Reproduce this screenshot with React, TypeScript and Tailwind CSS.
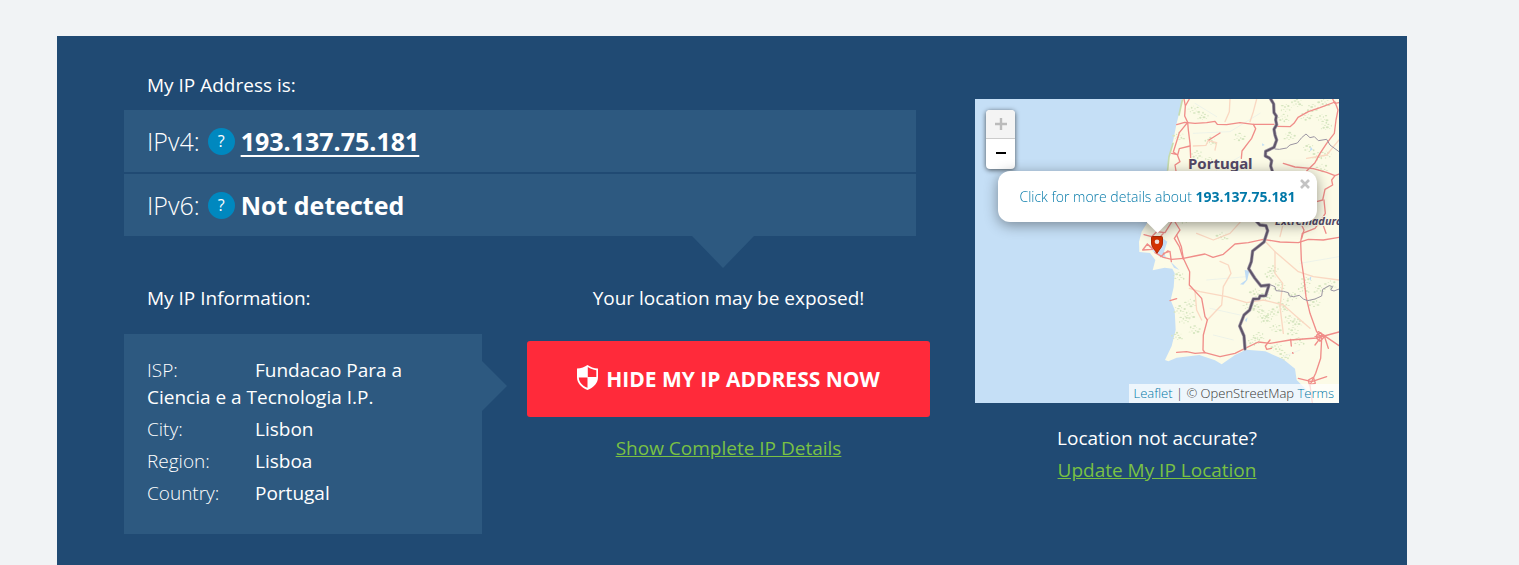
import { type ReactNode } from "react";

const details = [
  { label: "ISP:", value: "Fundacao Para a Ciencia e a Tecnologia I.P." },
  { label: "City:", value: "Lisbon" },
  { label: "Region:", value: "Lisboa" },
  { label: "Country:", value: "Portugal" },
];

const mainRoads = [
  // north
  "M132 27 L136 48 L148 27 M136 48 L134 78 L143 97 L145 120 L150 160 L152 205",
  "M110 104 L134 97 L165 100 L200 98 L225 94 L232 103 L260 104 L300 98 L340 103 L402 103",
  "M411 109 L450 110 L462 100 L474 82 L505 65 L540 53 L585 36 M585 36 L594 60 L588 90 L583 130 L560 160 L540 190 L525 218 L500 243",
  "M578 27 L585 40 L597 38",
  "M143 97 L118 128 L100 186 L113 195 L118 176 L150 168 M95 190 L112 194 L120 215 L105 225 L108 243",
  "M340 103 L347 116 L335 145 L325 158 L306 183 L304 205",
  "M207 150 L240 129",
  "M430 220 L465 231 L520 236 L560 247 L585 257 L597 252 M585 257 L575 270 L578 285 L555 298 L548 330 L530 335",
  "M552 330 L556 370 L540 395 L525 415 L487 430 L482 455",
  "M480 395 L492 420 L485 445 M547 398 L558 430",
  // Lisbon surroundings and the route east
  "M12 434 L35 440 L50 425 L75 428 L95 396 M35 440 L38 465 L70 430",
  "M105 396 L120 420 L103 445 L118 470 L130 508",
  "M8 480 L22 462 L38 478 L8 480 M22 462 L50 484 M45 488 L70 502 L95 508 L130 505",
  "M70 490 L90 484 L94 515 M62 500 L84 482",
  "M130 505 L165 498 L195 492 L219 502 L250 493 L285 462 L325 458 L370 448 L420 456 L475 458 L505 448 L550 450 L597 442",
  // southern motorways
  "M110 435 L124 470 L130 505 L149 545 L148 585 L185 625 L195 680 L202 690 L190 735 L189 780 L195 788",
  "M110 787 L140 785 L165 790 L195 788 L240 800 L285 790 L315 775 L355 756 L390 760 L450 750 L530 744 L597 726",
  "M482 455 L484 510 L492 565 L498 620 L510 670 L530 725 L545 745 L542 805 L527 850 L510 885 L517 939",
  "M525 740 L552 735 L565 775 M540 745 L525 765 M535 725 L597 767 M475 865 L515 875 L560 860",
  "M530 735 L542 728 L552 742 L540 754 L530 745 Z M505 870 L520 862 L526 880 L508 884 Z",
  "M90 632 L110 626 M390 750 L376 768 L380 778 L394 775 M452 748 L454 768 M458 788 L459 790",
];

const minorRoads = [
  "M270 27 L268 65 L255 95 M350 27 L340 65 L330 95",
  "M160 168 L198 166 L204 152 L230 158 L225 180",
  "M240 514 L265 525 L273 550 L250 590 L245 645 L202 690",
  "M148 595 L180 605 L260 620 L320 638 L370 630 L430 645 L470 680 L510 715",
  "M370 448 L405 485 L475 545 L520 560 L597 570",
  "M405 485 L405 550 L428 580 L420 650 L430 730",
  "M300 397 L270 430 L220 450 L170 430 M430 400 L420 440",
  "M165 605 L170 660 L185 690 M597 150 L560 195 L500 205",
];

const border =
  "M388 20 L401 42 L402 68 L409 78 L407 90 L410 104 L402 118 L405 135 L410 150 L402 172 L377 184 L376 198 L388 204 L395 212 L392 228 L397 243 M350 395 L360 405 L378 407 L383 422 L372 456 L338 483 L334 515 L326 536 L344 564 L363 588 L387 585 L377 617 L360 618 L357 626 L340 627 L329 660 L312 675 L299 708 L312 738 L315 777";

const woods = [
  [440, 55], [470, 40], [500, 80], [545, 85], [560, 110], [430, 85], [520, 55],
  [550, 40], [535, 200], [505, 175], [450, 140], [545, 235], [560, 195], [210, 155],
  [300, 142], [160, 60], [190, 80], [170, 195], [210, 215], [115, 140], [130, 390],
  [115, 560], [120, 660], [150, 640], [135, 690], [110, 740], [165, 720], [145, 675],
  [400, 540], [390, 555], [420, 590], [345, 610], [380, 620], [350, 655], [400, 670],
  [430, 640], [460, 620], [490, 600], [450, 690], [405, 715], [380, 690], [355, 740],
  [460, 725], [410, 775], [435, 800], [475, 755], [540, 600], [570, 585], [500, 575],
  [425, 655], [370, 675], [325, 650], [475, 700], [340, 755], [525, 640], [245, 440],
];

const speckle = [
  [-14, -3], [-9, 5], [-5, -7], [-2, 2], [3, 9], [5, -4], [9, 3], [13, -8], [16, 6], [1, -12],
];

function RegionMap() {
  return (
    <svg
      className="block h-full w-full"
      viewBox="0 0 364 304"
      preserveAspectRatio="xMidYMid slice"
      role="img"
      aria-label="Map of Portugal"
    >
      <rect width="364" height="304" fill="#c5dff6" />
      <g transform="translate(165 -9) scale(.33333)" fill="none" strokeLinejoin="round" strokeLinecap="round">
        <path
          d="M127 20 L120 60 L110 100 L100 150 L88 195 L82 243 L55 330 L30 385 L5 425 L-3 455 L-2 486 L30 489 L46 510 L38 541 L74 533 L97 536 L104 550 L101 592 L92 630 L104 660 L107 720 L95 768 L75 810 L85 814 L110 803 L178 795 L225 811 L245 823 L285 795 L318 779 L376 784 L430 808 L465 836 L470 870 L500 900 L515 945 L610 945 L610 20 Z"
          fill="#fcfbe7"
        />
        <path d="M127 30 L117 75 M99 160 L87 200 L83 240" stroke="#c5dcae" strokeWidth="5" />
        <path d="M36 482 L50 478 L68 445 L82 455 L72 485 L78 505 L60 500 L50 491 Z M92 515 L118 540 L102 533 Z" fill="#c5dff6" />
        <g fill="#d5e5bf">
          {woods.map(([x, y], i) =>
            speckle.map(([dx, dy], j) => (
              <ellipse
                key={`${i}-${j}`}
                cx={x + dx * (i % 2 ? 1 : -1)}
                cy={y + dy}
                rx={((i + j) % 4) + 1.5}
                ry={((i * 2 + j) % 3) + 1}
              />
            )),
          )}
        </g>
        <path
          d="M160 130 L270 125 L360 70 M165 40 L230 80 M200 570 L320 560 M210 655 L300 675 M220 735 L280 750 M480 520 L597 500 M430 800 L480 780 M230 240 L300 200"
          stroke="#e6efea"
          strokeWidth="2"
        />
        <path
          d="M300 583 L318 570 L314 540 L328 542 L322 570 L310 584 Z M512 170 L518 178 L510 184 Z M315 690 L323 682 L319 697 Z M366 160 L374 165 L367 168 Z M508 565 L514 558 L512 573 Z"
          fill="#bfdcf5"
        />
        <g stroke="#fad8c2" strokeWidth="4">
          {minorRoads.map((d) => (
            <path key={d} d={d} />
          ))}
        </g>
        <g stroke="#f08d89" strokeWidth="4">
          {mainRoads.map((d) => (
            <path key={d} d={d} />
          ))}
        </g>
        <g stroke="#9a94a2" strokeWidth="3">
          <path d="M405 177 L418 178 L440 174 L450 165 L472 159 L485 143 L498 132 L510 143 L523 140 L535 152 L560 148 L570 165 L597 185" />
          <path d="M388 583 L405 590 L408 602 L430 604 L445 608 L448 618 L460 620 L478 616 L490 627 L503 632 L525 627 L545 618 L548 598 L568 587 L578 590 L572 600 L582 603 L600 596" />
        </g>
        <path d={border} stroke="#a59eab" strokeWidth="10" />
        <path d={border} stroke="#5f5569" strokeWidth="6" />
      </g>
      <g fill="#534866" stroke="#fcfbe7" strokeWidth="2" paintOrder="stroke" fontFamily="'Noto Sans', sans-serif" fontWeight="700">
        <text x="213" y="70" fontSize="15">Portugal</text>
        <text x="300" y="126" fontSize="11" fontStyle="italic">Extremadura</text>
      </g>
    </svg>
  );
}

function ShieldIcon() {
  return (
    <svg className="-mt-1 h-[25px] w-[21px]" viewBox="0 0 21 25" aria-hidden="true">
      <path d="M10.5 0 C13 2 17 3.3 21 3.5 V12 C21 18 17 22.5 10.5 25 C4 22.5 0 18 0 12 V3.5 C4 3.3 8 2 10.5 0 Z" fill="#fff" />
      <path d="M10.8 2.1 C13.5 3.8 16 4.8 19.3 5.2 V12 H10.8 Z M1.8 12.4 H10.5 V22.8 C5 20.5 2 17 1.8 12.4 Z" fill="#ff2a3a" />
    </svg>
  );
}

function AddressRow({ label, children }: { label: string; children: ReactNode }) {
  return (
    <div className="flex h-[62px] items-center bg-[#2d5980] px-[23px] text-[25px]">
      <span className="font-light">{label}</span>
      <button
        type="button"
        aria-label={`What is ${label}`}
        className="mr-1.5 ml-2 flex size-[27px] items-center justify-center rounded-full bg-[#0088bf] text-base"
      >
        ?
      </button>
      {children}
    </div>
  );
}

function LocationMap() {
  return (
    <div className="relative h-[304px] overflow-hidden">
      <RegionMap />
      <div className="absolute top-[11px] left-[11px] w-[29px] overflow-hidden rounded-[4px] bg-white text-black shadow-[0_1px_5px_rgba(0,0,0,.65)]">
        <button type="button" disabled aria-label="Zoom in" className="flex h-[29px] w-full items-center justify-center border-b border-[#ccc] bg-[#f4f4f4]">
          <svg viewBox="0 0 12 12" className="size-3" aria-hidden="true">
            <path d="M0 6H12M6 0V12" stroke="#bbb" strokeWidth="2.4" />
          </svg>
        </button>
        <button type="button" aria-label="Zoom out" className="flex h-[30px] w-full items-center justify-center">
          <svg viewBox="0 0 12 12" className="size-3" aria-hidden="true">
            <path d="M1 5H11" stroke="#000" strokeWidth="2" />
          </svg>
        </button>
      </div>

      <svg viewBox="0 0 12 18" className="absolute top-[137px] left-[176px] h-[18px] w-3" aria-hidden="true">
        <path d="M1.5 .5 H10.5 Q11.5 .5 11.5 1.5 V7 C11.5 11 8.5 13 6 17.3 C3.5 13 .5 11 .5 7 V1.5 Q.5 .5 1.5 .5 Z" fill="#d63200" stroke="#b12c08" />
        <circle cx="6" cy="5.8" r="2.3" fill="#f6e5df" />
      </svg>

      <div className="absolute top-[72px] left-[23px] drop-shadow-[0_3px_7px_rgba(0,0,0,.4)]">
        <div className="flex h-[51px] w-[319px] items-center justify-center rounded-[12px] bg-white text-sm font-light whitespace-nowrap text-[#0078a8]">
          <a href="#details">
            Click for more details about <b className="font-bold">193.137.75.181</b>
          </a>
          <button type="button" aria-label="Close" className="absolute top-2 right-[7px]">
            <svg viewBox="0 0 10 10" className="size-[10px]" aria-hidden="true">
              <path d="M1 1L9 9M9 1L1 9" stroke="#c3c3c3" strokeWidth="2.6" />
            </svg>
          </button>
        </div>
        <div className="mx-auto h-[11px] w-[22px] bg-white [clip-path:polygon(0_0,100%_0,50%_100%)]" />
      </div>

      <div className="absolute right-0 bottom-0 h-[19px] bg-white/70 px-[5px] text-[13px] leading-[19px] font-light text-[#333]">
        <a href="#leaflet" className="text-[#0078a8]">Leaflet</a> | © OpenStreetMap{" "}
        <a href="#terms" className="text-[#0078a8]">Terms</a>
      </div>
    </div>
  );
}

export default function App() {
  return (
    <div className="flex min-h-screen bg-[#f1f3f5] pt-9 pr-28 pl-[57px] font-['Open_Sans',sans-serif] text-[19px] leading-[27px] text-white">
      <main className="grid flex-1 grid-cols-[minmax(0,1fr)_364px] content-start gap-[45px] bg-[#204a73] pt-9 pr-[68px] pb-[31px] pl-[67px]">
        <section>
          <h2 className="mb-[11px] pl-[23px]">My IP Address is:</h2>
          <div className="relative mr-3.5 flex flex-col gap-[2px]">
            <AddressRow label="IPv4:">
              <a href="#details" className="font-bold underline decoration-2 underline-offset-4">
                193.137.75.181
              </a>
            </AddressRow>
            <AddressRow label="IPv6:">
              <span className="font-bold">Not detected</span>
            </AddressRow>
            <div className="absolute top-full right-[162px] h-[32px] w-[62px] bg-[#2d5980] [clip-path:polygon(0_0,100%_0,50%_100%)]" />
          </div>

          <div className="mt-[49px] grid grid-cols-[358fr_403fr] gap-[45px]">
            <div>
              <h2 className="mb-[22px] pl-[23px]">My IP Information:</h2>
              <div className="relative bg-[#2d5980] px-[23px] pt-[23px] pb-[22px]">
                <dl>
                  {details.map(({ label, value }) => (
                    <div key={label} className="mb-[5px]">
                      <dt className="inline-block w-[108px] font-light">{label}</dt>
                      <dd className="inline">{value}</dd>
                    </div>
                  ))}
                </dl>
                <div className="absolute top-[27px] left-full h-[50px] w-[25px] bg-[#2d5980] [clip-path:polygon(0_0,100%_50%,0_100%)]" />
              </div>
            </div>
            <div className="text-center">
              <p>Your location may be exposed!</p>
              <button
                type="button"
                className="mt-[29px] mb-[18px] flex h-[76px] w-full items-center justify-center gap-2 rounded-[3px] bg-[#ff2a3a] text-[21px] font-bold uppercase"
              >
                <ShieldIcon />
                Hide my IP address now
              </button>
              <a href="#details" className="text-[#7ac143] underline">
                Show Complete IP Details
              </a>
            </div>
          </div>
        </section>

        <aside className="pt-[27px] text-center">
          <LocationMap />
          <p className="mt-[22px] mb-[5px]">Location not accurate?</p>
          <a href="#update" className="text-[#7ac143] underline">
            Update My IP Location
          </a>
        </aside>
      </main>
    </div>
  );
}
